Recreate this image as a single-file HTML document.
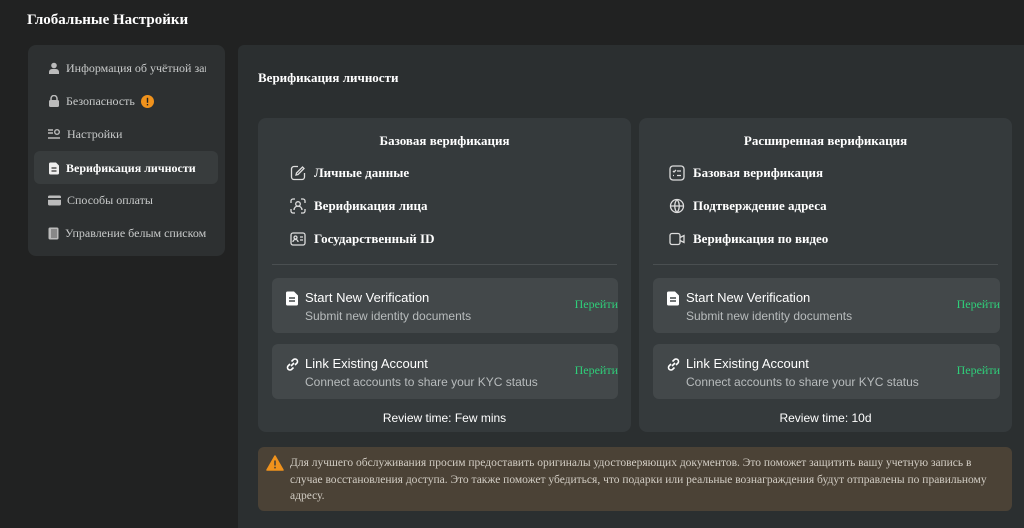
<!DOCTYPE html>
<html><head><meta charset="utf-8"><style>
*{box-sizing:border-box;margin:0;padding:0}
body{width:1024px;height:528px;background:#212222;color:#e6e6e6;font-family:"Liberation Serif",serif;position:relative;overflow:hidden}
.abs{position:absolute}
.title{left:27px;top:12px;font-size:15px;font-weight:bold;color:#fff}
.side{left:28px;top:45px;width:197px;height:211px;background:#2d3031;border-radius:8px}
.si{position:absolute;left:20px;font-size:12px;color:#c9cbcb;display:flex;align-items:center;gap:6px;height:20px;white-space:nowrap;width:158px;overflow:hidden}
.si svg{flex:none}
.act{position:absolute;left:6px;top:106px;width:184px;height:33px;background:#383c3d;border-radius:6px}
.main{left:238px;top:45px;width:786px;height:483px;background:#2b2f30;border-radius:6px 0 0 0}
.h{left:258px;top:70px;font-size:13px;font-weight:bold;color:#fff}
.card{top:118px;height:314px;background:#353a3c;border-radius:8px;width:373px}
.ct{position:absolute;top:15px;width:100%;text-align:center;font-size:13px;font-weight:bold;color:#fff}
.f{position:absolute;left:32px;display:flex;align-items:center;gap:8px;font-size:13px;font-weight:bold;color:#fff}
.div{position:absolute;left:14px;right:14px;top:146px;height:1px;background:#4a4f51}
.it{position:absolute;left:14px;width:346px;height:55px;background:#43484a;border-radius:6px}
.it .t{position:absolute;left:33px;top:12px;font-family:"Liberation Sans",sans-serif;font-size:13px;color:#fff}
.it .s{position:absolute;left:33px;top:31px;font-family:"Liberation Sans",sans-serif;font-size:12px;color:#b8bcbd}
.it .g{position:absolute;right:0;top:19px;font-size:12px;color:#2fcf7a}
.it svg{position:absolute;left:13px;top:13px}
.rv{position:absolute;top:293px;width:100%;text-align:center;font-family:"Liberation Sans",sans-serif;font-size:12px;color:#fff}
.warn{left:258px;top:447px;width:754px;height:64px;background:#4b4236;border-radius:6px}
.warn p{position:absolute;left:32px;top:8px;right:14px;font-size:11.5px;line-height:16.5px;color:#d2cdc4}
</style></head><body>
<div class="abs title">Глобальные Настройки</div>
<div class="abs side">
<div class="act"></div>
<div class="si" style="top:13px"><svg width="12" height="12" viewBox="0 0 12 12"><circle cx="6" cy="3.5" r="2.8" fill="#bbb"/><path d="M1 12v-2a3 3 0 013-3h4a3 3 0 013 3v2z" fill="#bbb"/></svg>Информация об учётной записи</div>
<div class="si" style="top:46px"><svg width="12" height="12" viewBox="0 0 12 12"><path d="M3 5V3.5a3 3 0 016 0V5" stroke="#bbb" stroke-width="1.5" fill="none"/><rect x="1" y="5" width="10" height="7" rx="1.5" fill="#bbb"/></svg>Безопасность <svg width="13" height="13" viewBox="0 0 13 13"><circle cx="6.5" cy="6.5" r="6.5" fill="#f0921c"/><rect x="5.8" y="2.8" width="1.4" height="5" fill="#222"/><rect x="5.8" y="9" width="1.4" height="1.4" fill="#222"/></svg></div>
<div class="si" style="top:79px"><svg width="13" height="12" viewBox="0 0 13 12"><path d="M0 2h5M0 5h5M0 10h12" stroke="#bbb" stroke-width="1.4"/><circle cx="9" cy="4" r="2.3" stroke="#bbb" stroke-width="1.4" fill="none"/></svg>Настройки</div>
<div class="si" style="top:113px;color:#fff;font-weight:bold"><svg width="12" height="13" viewBox="0 0 12 13"><path d="M1 2a1.5 1.5 0 011.5-1.5H8l3 3V11a1.5 1.5 0 01-1.5 1.5h-7A1.5 1.5 0 011 11z" fill="#eee"/><path d="M3.5 6h5M3.5 9h5" stroke="#333" stroke-width="1.2"/></svg>Верификация личности</div>
<div class="si" style="top:145px"><svg width="13" height="11" viewBox="0 0 13 11"><rect x="0" y="0.5" width="13" height="10" rx="1.5" fill="#bbb"/><rect x="0" y="3" width="13" height="1.8" fill="#2d3031"/></svg>Способы оплаты</div>
<div class="si" style="top:178px"><svg width="11" height="13" viewBox="0 0 11 13"><rect x="0.5" y="0.5" width="10" height="12" rx="1.5" fill="#bbb"/><rect x="3" y="2" width="6" height="9" fill="#888"/></svg>Управление белым списком</div>
</div>
<div class="abs main"></div>
<div class="abs h">Верификация личности</div>

<div class="abs card" style="left:258px">
<div class="ct">Базовая верификация</div>
<div class="f" style="top:47px"><svg width="16" height="16" viewBox="0 0 16 16" fill="none" stroke="#ddd" stroke-width="1.3"><path d="M8 1.5H4A2.5 2.5 0 001.5 4v8A2.5 2.5 0 004 14.5h8a2.5 2.5 0 002.5-2.5V8"/><path d="M12.5 2l1.5 1.5L8 9.5 6 10l.5-2z"/></svg>Личные данные</div>
<div class="f" style="top:80px"><svg width="16" height="16" viewBox="0 0 16 16" fill="none" stroke="#ddd" stroke-width="1.3"><path d="M1 5V3a2 2 0 012-2h2M11 1h2a2 2 0 012 2v2M15 11v2a2 2 0 01-2 2h-2M5 15H3a2 2 0 01-2-2v-2"/><circle cx="8" cy="6" r="2.3"/><path d="M4 12a4 4 0 018 0"/></svg>Верификация лица</div>
<div class="f" style="top:113px"><svg width="16" height="16" viewBox="0 0 16 16" fill="none" stroke="#ddd" stroke-width="1.3"><rect x="1" y="2" width="14" height="12" rx="2"/><circle cx="5.5" cy="6.5" r="1.5"/><path d="M3 11a2.5 2.5 0 015 0M10 6h3M10 9h3"/></svg>Государственный ID</div>
<div class="div"></div>
<div class="it" style="top:160px"><svg width="14" height="15" viewBox="0 0 14 15"><path d="M1 2a1.5 1.5 0 011.5-1.5H9l4 4V13a1.5 1.5 0 01-1.5 1.5h-9A1.5 1.5 0 011 13z" fill="#fff"/><path d="M4 7h6M4 10h6" stroke="#43484a" stroke-width="1.4"/></svg><div class="t">Start New Verification</div><div class="s">Submit new identity documents</div><div class="g">Перейти</div></div>
<div class="it" style="top:226px"><svg width="15" height="15" viewBox="0 0 15 15" fill="none" stroke="#fff" stroke-width="1.6"><path d="M6 9L9 6M5 7L3 9a2.5 2.5 0 003.5 3.5l2-2M10 8l2-2A2.5 2.5 0 008.5 2.5l-2 2"/></svg><div class="t">Link Existing Account</div><div class="s">Connect accounts to share your KYC status</div><div class="g">Перейти</div></div>
<div class="rv">Review time: Few mins</div>
</div>

<div class="abs card" style="left:639px">
<div class="ct">Расширенная верификация</div>
<div class="f" style="top:47px;left:30px"><svg width="16" height="16" viewBox="0 0 16 16" fill="none" stroke="#ddd" stroke-width="1.3"><rect x="1" y="1" width="14" height="14" rx="3"/><path d="M4 6l1 1 2-2M4 10.5h1M8 6h4M8 10.5h4"/></svg>Базовая верификация</div>
<div class="f" style="top:80px;left:30px"><svg width="16" height="16" viewBox="0 0 16 16" fill="none" stroke="#ddd" stroke-width="1.3"><circle cx="8" cy="8" r="6.5"/><path d="M1.5 8h13M8 1.5c-3 3.5-3 9.5 0 13M8 1.5c3 3.5 3 9.5 0 13"/></svg>Подтверждение адреса</div>
<div class="f" style="top:113px;left:30px"><svg width="16" height="16" viewBox="0 0 16 16" fill="none" stroke="#ddd" stroke-width="1.3"><rect x="1" y="2.5" width="10" height="11" rx="2"/><path d="M11 6.5l4-2v7l-4-2"/></svg>Верификация по видео</div>
<div class="div"></div>
<div class="it" style="top:160px;width:347px"><svg width="14" height="15" viewBox="0 0 14 15"><path d="M1 2a1.5 1.5 0 011.5-1.5H9l4 4V13a1.5 1.5 0 01-1.5 1.5h-9A1.5 1.5 0 011 13z" fill="#fff"/><path d="M4 7h6M4 10h6" stroke="#43484a" stroke-width="1.4"/></svg><div class="t">Start New Verification</div><div class="s">Submit new identity documents</div><div class="g">Перейти</div></div>
<div class="it" style="top:226px;width:347px"><svg width="15" height="15" viewBox="0 0 15 15" fill="none" stroke="#fff" stroke-width="1.6"><path d="M6 9L9 6M5 7L3 9a2.5 2.5 0 003.5 3.5l2-2M10 8l2-2A2.5 2.5 0 008.5 2.5l-2 2"/></svg><div class="t">Link Existing Account</div><div class="s">Connect accounts to share your KYC status</div><div class="g">Перейти</div></div>
<div class="rv">Review time: 10d</div>
</div>

<div class="abs warn"><svg style="position:absolute;left:8px;top:8px" width="18" height="16" viewBox="0 0 18 16"><path d="M9 1L17 15H1z" fill="#f0921c" stroke="#f0921c" stroke-linejoin="round" stroke-width="1.5"/><rect x="8.2" y="5.5" width="1.6" height="5" fill="#4b4236"/><rect x="8.2" y="11.8" width="1.6" height="1.6" fill="#4b4236"/></svg><p>Для лучшего обслуживания просим предоставить оригиналы удостоверяющих документов. Это поможет защитить вашу учетную запись в случае восстановления доступа. Это также поможет убедиться, что подарки или реальные вознаграждения будут отправлены по правильному адресу.</p></div>
</body></html>
